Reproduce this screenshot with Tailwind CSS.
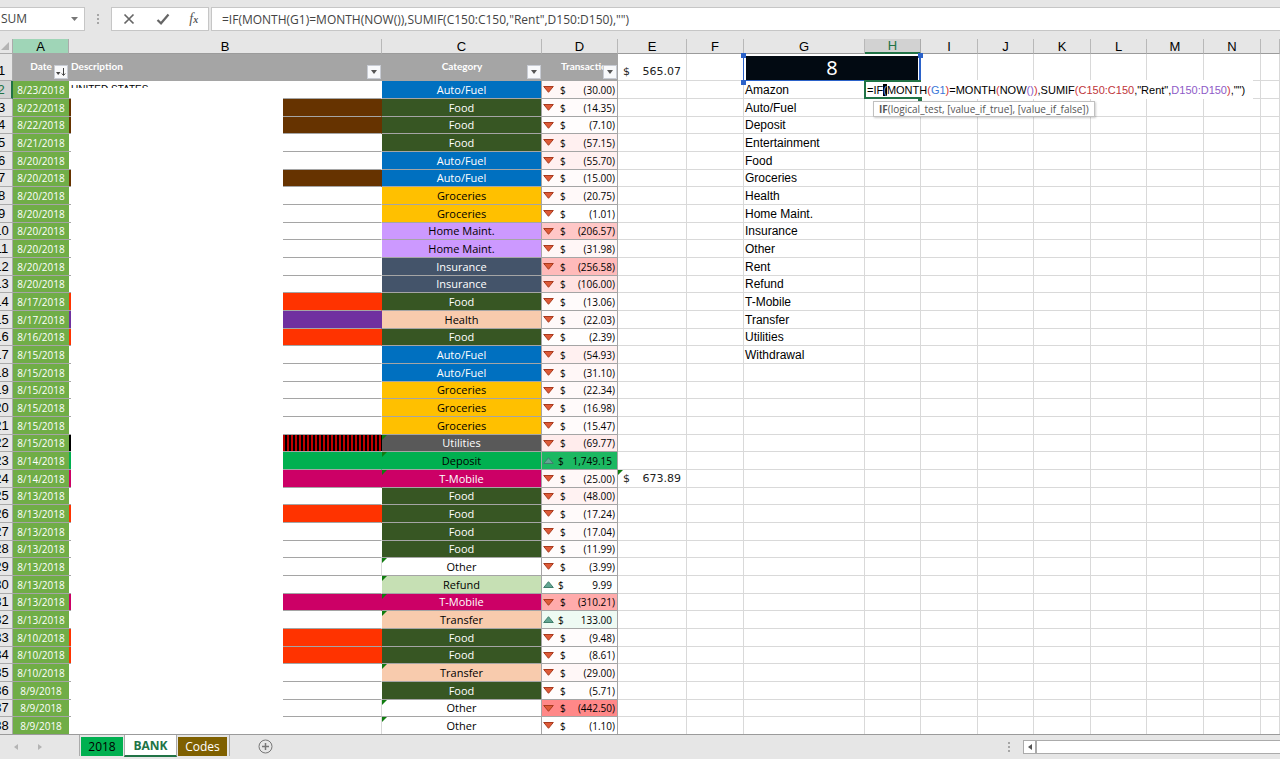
<!DOCTYPE html>
<html lang="en">
<head>
<meta charset="utf-8">
<title>BANK</title>
<script src="https://cdn.jsdelivr.net/npm/@tailwindcss/browser@4"></script>
</head>
<body class="flex h-screen flex-col overflow-hidden bg-[#e6e6e6] font-['Liberation_Sans',Arial,sans-serif] text-xs text-black">

<header class="flex h-[37px] shrink-0 items-start pt-[7px] font-['Open_Sans',sans-serif] text-[#444]">
  <div class="flex h-6 w-[85px] items-center border border-l-0 border-[#c6c6c6] bg-white">
    <input aria-label="Name box" value="SUM" class="w-full min-w-0 flex-1 bg-transparent pl-px text-xs outline-none">
    <button aria-label="Open name list" class="flex h-full w-5 items-center justify-center"><svg class="h-1 w-[7px]" viewBox="0 0 7 4"><path d="M0 0h7L3.5 4z" fill="#777"/></svg></button>
  </div>
  <svg class="mx-3 h-6 w-[2px]" viewBox="0 0 2 24" fill="#a6a6a6"><path d="M0 7h2v2H0zM0 11h2v2H0zM0 15h2v2H0z"/></svg>
  <div class="flex h-6 w-[98px] items-center justify-around border border-[#c6c6c6] bg-white">
    <button aria-label="Cancel"><svg class="size-[14px]" viewBox="0 0 14 14" fill="none" stroke="#666" stroke-width="1.7"><path d="M2.500 2.500L11.500 11.500M11.500 2.500L2.500 11.500"/></svg></button>
    <button aria-label="Enter"><svg class="size-[14px]" viewBox="0 0 14 14" fill="none" stroke="#666" stroke-width="2.200"><path d="M1.500 8L5 11.300L12.500 2.500"/></svg></button>
    <button aria-label="Insert function" class="flex items-baseline font-['Liberation_Serif',serif] italic leading-4 text-[#555]"><span class="text-sm">f</span><span class="text-[10px] font-bold">x</span></button>
  </div>
  <input aria-label="Formula bar" value='=IF(MONTH(G1)=MONTH(NOW()),SUMIF(C150:C150,"Rent",D150:D150),"")' class="ml-[2px] h-6 min-w-0 flex-1 border border-r-0 border-[#c6c6c6] bg-white pl-[10px] text-xs outline-none">
</header>

<main class="min-h-0 flex-1 overflow-hidden pt-[2px]">
  <div class="relative -ml-3 bg-white">
    <table class="w-full table-fixed border-separate border-spacing-0">
      <colgroup>
        <col class="w-[25px]"><col class="w-[56px]"><col class="w-[313px]"><col class="w-[160px]"><col class="w-[76px]"><col class="w-[69px]"><col class="w-[57px]"><col class="w-[121px]"><col class="w-[56px]"><col class="w-[57px]"><col class="w-[56px]"><col class="w-[57px]"><col class="w-[56px]"><col class="w-[57px]"><col class="w-[57px]"><col>
      </colgroup>
      <thead><tr id="letters"></tr></thead>
      <tbody id="rows"></tbody>
    </table>
    <div class="absolute bottom-0 left-[83px] top-[49px] w-[212px] bg-white"></div>
  </div>
</main>

<footer class="flex h-[25px] shrink-0 items-start border-t border-[#9b9b9b] bg-[#e6e6e6] font-['Open_Sans',sans-serif]">
  <div class="flex h-6 w-[79px] items-center gap-5 pl-[14px]">
    <button aria-label="Previous sheet"><svg class="h-[6px] w-1" viewBox="0 0 4 6"><path d="M4 0v6L0 3z" fill="#b4b4b4"/></svg></button>
    <button aria-label="Next sheet"><svg class="h-[6px] w-1" viewBox="0 0 4 6"><path d="M0 0v6l4-3z" fill="#b4b4b4"/></svg></button>
  </div>
  <nav class="flex h-6 items-start" aria-label="Sheets">
    <div class="flex border-l border-[#ababab] pl-px pr-px pt-[2px]"><button class="h-[19px] w-[42px] bg-[#00b050]">2018</button></div>
    <button class="h-[22px] w-[53px] border-x border-b-2 border-x-[#ababab] border-b-[#217346] bg-white pt-[2px] font-bold text-[#217346]">BANK</button>
    <div class="flex border-r border-[#ababab] pl-px pr-[2px] pt-[2px]"><button class="h-[19px] w-[49px] bg-[#7f6000] text-white">Codes</button></div>
  </nav>
  <button aria-label="New sheet" class="ml-7 mt-1"><svg class="size-[15px]" viewBox="0 0 15 15" fill="none" stroke="#777"><circle cx="7.500" cy="7.500" r="6.500"/><path d="M7.500 4v7M4 7.500h7" stroke-width="1.500"/></svg></button>
  <div class="ml-auto mt-[5px] flex h-[14px] w-[272px] items-center">
    <svg class="mr-[13px] h-[10px] w-[2px]" viewBox="0 0 2 10" fill="#a6a6a6"><path d="M0 0h2v2H0zM0 4h2v2H0zM0 8h2v2H0z"/></svg>
    <button aria-label="Scroll left" class="flex h-[14px] w-[13px] items-center justify-center border border-[#ababab] bg-white"><svg class="h-[6px] w-1" viewBox="0 0 4 6"><path d="M4 0v6L0 3z" fill="#555"/></svg></button>
    <div class="h-[14px] flex-1 border border-r-0 border-[#ababab] bg-white"></div>
  </div>
</footer>

<script>
const fills = {
  'Auto/Fuel': 'bg-[#0070c0] text-white', 'Food': 'bg-[#375623] text-white', 'Groceries': 'bg-[#ffc000]',
  'Home Maint.': 'bg-[#cc99ff]', 'Insurance': 'bg-[#44546a] text-white', 'Health': 'bg-[#f8cbad]',
  'Utilities': 'bg-[#595959] text-white', 'Deposit': 'bg-[#00b050]', 'T-Mobile': 'bg-[#cc0066] text-white',
  'Other': 'bg-white', 'Refund': 'bg-[#c6e0b4]', 'Transfer': 'bg-[#f8cbad]'
};
const marks = {
  brown: 'bg-[#663300]', orange: 'bg-[#ff3300]', purple: 'bg-[#7030a0]', green: 'bg-[#00b050]', pink: 'bg-[#cc0066]',
  stripe: 'bg-[repeating-linear-gradient(90deg,#000_0_2px,#c00000_2px_4px)]', '': 'bg-white'
};
// date, category, amount, description fill, error flag
const data = [
  ['8/23','Auto/Fuel',-30,''],['8/22','Food',-14.35,'brown'],['8/22','Food',-7.1,'brown'],['8/21','Food',-57.15,''],
  ['8/20','Auto/Fuel',-55.7,''],['8/20','Auto/Fuel',-15,'brown'],['8/20','Groceries',-20.75,''],['8/20','Groceries',-1.01,''],
  ['8/20','Home Maint.',-206.57,''],['8/20','Home Maint.',-31.98,''],['8/20','Insurance',-256.58,''],['8/20','Insurance',-106,''],
  ['8/17','Food',-13.06,'orange'],['8/17','Health',-22.03,'purple'],['8/16','Food',-2.39,'orange'],['8/15','Auto/Fuel',-54.93,''],
  ['8/15','Auto/Fuel',-31.1,''],['8/15','Groceries',-22.34,''],['8/15','Groceries',-16.98,''],['8/15','Groceries',-15.47,''],
  ['8/15','Utilities',-69.77,'stripe',1],['8/14','Deposit',1749.15,'green',1],['8/14','T-Mobile',-25,'pink',1],['8/13','Food',-48,''],
  ['8/13','Food',-17.24,'orange'],['8/13','Food',-17.04,''],['8/13','Food',-11.99,''],['8/13','Other',-3.99,'',1],
  ['8/13','Refund',9.99,'',1],['8/13','T-Mobile',-310.21,'pink',1],['8/13','Transfer',133,'',1],['8/10','Food',-9.48,'orange'],
  ['8/10','Food',-8.61,'orange'],['8/10','Transfer',-29,'',1],['8/9','Food',-5.71,''],['8/9','Other',-442.5,'',1],['8/9','Other',-1.1,'',1]
];
const names = ['Amazon','Auto/Fuel','Deposit','Entertainment','Food','Groceries','Health','Home Maint.','Insurance','Other','Rent','Refund','T-Mobile','Transfer','Utilities','Withdrawal'];

const letters = ['', ...'ABCDEFGHIJKLMNO'];
document.getElementById('letters').innerHTML = letters.map((l, i) => {
  const base = 'h-[15px] p-0 font-normal text-[13px] leading-[13px] ';
  if (!i) return `<th aria-label="Select all" class="${base}border-b border-r border-[#ababab] bg-[#e6e6e6]"><svg class="ml-auto mr-[3px] size-2" viewBox="0 0 8 8"><path d="M8 0v8H0z" fill="#b4b4b4"/></svg></th>`;
  if (l === 'A') return `<th scope="col" class="${base}border-b border-b-[#a5a5a5] border-r border-r-[#ababab] bg-[#9fd5b7]">A</th>`;
  if (l === 'H') return `<th scope="col" class="${base}border-b-2 border-b-[#217346] border-r border-r-[#ababab] bg-[#d2d2d2] text-[#217346]">H</th>`;
  return `<th scope="col" class="${base}border-b border-r border-b-[#9b9b9b] border-r-[#b8b8b8] bg-[#e6e6e6]">${l === 'O' ? '' : l}</th>`;
}).join('');

const rowHead = (n) => n === 2
  ? `<th scope="row" class="overflow-hidden border-b border-r-2 border-b-[#ababab] border-r-[#217346] bg-[#d2d2d2] p-0 pl-[3px] text-[13px] font-normal leading-4 text-[#217346]">2</th>`
  : `<th scope="row" class="overflow-hidden border-b border-r border-[#ababab] bg-[#e6e6e6] p-0 pl-[3px] text-[13px] font-normal leading-4 ${n === 1 ? 'pt-[8px]' : ''}">${n}</th>`;
const empty = '<td class="border-b border-r border-[#d9d9d9] p-0"></td>';
const flag = '<svg class="absolute left-0 top-0 size-[5px]" viewBox="0 0 5 5"><path d="M0 0h5L0 5z" fill="#107c10"/></svg>';
const money = (v) => `<div class="flex justify-between pl-[5px] pr-[5px] font-['DejaVu_Sans',sans-serif] text-[11px] leading-4 text-[#222]"><span>$</span><span>${v}</span></div>`;
const arrow = '<svg class="h-[5px] w-2" viewBox="0 0 8 5"><path d="M1 0h6L4 4z" fill="#555"/></svg>';
const sortIcon = '<svg class="h-[9px] w-[10px]" viewBox="0 0 10 9"><path d="M0 4h4.500L2.200 7z" fill="#444"/><path d="M7.500 0v7M5.800 5.500l1.700 2 1.700-2" fill="none" stroke="#444"/></svg>';
const filter = (label, icon) => `<button aria-label="Filter ${label}" class="absolute bottom-px right-px flex size-[14px] items-center justify-center border border-[#c8ccd4] bg-[#f8f9fb]">${icon}</button>`;
const head = (label, cls, icon) => `<td class="relative overflow-hidden whitespace-nowrap border-b border-[#a5a5a5] bg-[#a5a5a5] p-0 font-['Lato',sans-serif] text-[10px] font-bold text-white ${cls}">${label}${filter(label, icon)}</td>`;

const handle = 'absolute size-[5px] bg-[#2b62c9] ';
let html = `<tr class="h-[27px]">${rowHead(1)}${head('Date', 'text-center', sortIcon)}${head('Description', 'pl-[2px]', arrow)}${head('Category', 'text-center', arrow)}${head('Transaction', 'pl-[19px]', arrow)}
<td class="border-b border-r border-[#d9d9d9] p-0 align-bottom">${money('565.07')}</td>${empty}
<td colspan="2" class="relative border-b border-r border-[#2b62c9] bg-white p-0 pl-[2px] pr-[2px] pt-px text-center font-['Noto_Sans',sans-serif] text-xl text-white"><div class="h-6 bg-[#020a12] leading-6">8</div>
<span class="absolute -left-px bottom-0 right-0 top-0 border-x border-[#2b62c9]"></span>
<span class="${handle}-left-[3px] -top-px"></span><span class="${handle}-right-[3px] -top-px"></span><span class="${handle}-bottom-[3px] -left-[3px]"></span><span class="${handle}-bottom-[2px] -right-[3px] z-10"></span></td>${empty.repeat(7)}</tr>`;

const formula = `<td class="relative z-20 border-b border-r border-[#d9d9d9] p-0">
<div class="absolute -left-px -top-px flex h-[19px] w-max items-center whitespace-pre bg-white pl-[3px] pr-2 text-[11px] leading-4"><span>=IF<span class="bg-black text-[#6a9cf0]">(</span>MONTH<span class="text-[#d13438]">(</span><span class="text-[#3c78d8]">G1</span><span class="text-[#d13438]">)</span>=MONTH<span class="text-[#d13438]">(</span>NOW<span class="text-[#8e5bc7]">()</span><span class="text-[#d13438]">)</span>,SUMIF<span class="text-[#d13438]">(</span><span class="text-[#c0353a]">C150:C150</span>,"Rent",<span class="text-[#8e5bc7]">D150:D150</span><span class="text-[#d13438]">)</span>,"")</span></div>
<div class="absolute -left-px -right-px -top-px h-[19px] border-2 border-r-0 border-[#217346]"></div>
<div class="absolute -right-[2px] top-4 size-[4px] bg-[#217346]"></div>
<div role="tooltip" class="absolute left-2 top-5 w-max border border-[#c0c0c0] bg-white px-[5px] font-['Open_Sans',sans-serif] text-[10px] leading-[14px] text-[#555] shadow-[1px_1px_2px_#0003]"><b>IF</b>(logical_test, [value_if_true], [value_if_false])</div></td>`;

data.forEach(([date, cat, amt, mark, err], i) => {
  const up = amt > 0, v = Math.abs(amt), t = v / 1749.15;
  const tint = up ? `rgb(${Math.round(255 - 227 * t)},${Math.round(255 - 71 * t)},${Math.round(255 - 157 * t)})`
                  : `rgb(255,${Math.round(255 - v * 0.27)},${Math.round(255 - v * 0.27)})`;
  const num = v.toLocaleString('en-US', {minimumFractionDigits: 2});
  const icon = up
    ? '<svg class="h-[7px] w-[11px]" viewBox="0 0 11 7"><path d="M.700 6.500L5.500.700L10.300 6.500z" fill="#63a693" stroke="#3f7f6c"/></svg>'
    : '<svg class="h-[7px] w-[11px]" viewBox="0 0 11 7"><path d="M.700.500h9.600L5.500 6.300z" fill="#de5a38" stroke="#a83a1e"/></svg>';
  html += `<tr class="${i % 3 === 2 ? 'h-[17px]' : 'h-[18px]'}">${rowHead(i + 2)}
<td class="border-b border-[#a5a5a5] bg-[#70ad47] p-0 text-center font-['Open_Sans',sans-serif] text-[10px] leading-4 text-white">${date}/2018</td>
<td class="border-b border-r border-b-[#a5a5a5] ${cat === 'Other' ? 'border-r-[#d9d9d9]' : 'border-r-transparent'} ${marks[mark]} overflow-hidden whitespace-nowrap p-0 pl-[2px] text-[10px] leading-4">${i ? '' : 'UNITED STATES'}</td>
<td class="relative border-b border-r border-[#a5a5a5] ${fills[cat]} p-0 text-center font-['Open_Sans',sans-serif] text-[11px] leading-4">${err ? flag : ''}${cat}</td>
<td class="border-b border-r border-[#a5a5a5] p-0" style="background:${tint}"><div class="flex items-center pl-px font-['Open_Sans',sans-serif] text-[10px] leading-4 ${up ? 'gap-1 pr-[5px]' : 'gap-[6px] pr-[2px]'}">${icon}<span>$</span><span class="ml-auto">${up ? num : `(${num})`}</span></div></td>
${i === 22 ? `<td class="relative border-b border-r border-[#d9d9d9] p-0">${flag}${money('673.89')}</td>` : empty}${empty}
<td class="border-b border-r border-[#d9d9d9] p-0 pl-px leading-4">${names[i] || ''}</td>${i ? empty : formula}${empty.repeat(7)}</tr>`;
});
document.getElementById('rows').innerHTML = html;
</script>
</body>
</html>
